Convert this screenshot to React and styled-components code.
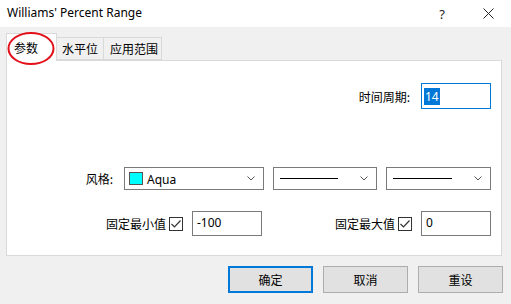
import React from 'react';
import styled, { createGlobalStyle } from 'styled-components';

const GlobalStyle = createGlobalStyle`
  html, body {
    margin: 0;
    padding: 0;
    background: #f0f0f0;
  }
  body {
    font-family: "Noto Sans", "Noto Sans CJK SC", sans-serif;
    font-size: 12px;
    color: #000;
  }
`;

const Window = styled.div`
  width: 511px;
  height: 304px;
  display: flex;
  flex-direction: column;
  background: #f0f0f0;
  overflow: hidden;
`;

const TitleBar = styled.div`
  height: 27px;
  flex: none;
  background: #fff;
  display: flex;
  align-items: center;
  padding-left: 7px;
`;

const Title = styled.div`
  flex: 1;
  font-size: 12px;
  margin-top: -2px;
`;

const TitleButton = styled.div`
  width: 46px;
  height: 27px;
  display: flex;
  align-items: center;
  justify-content: center;
  font-size: 13px;
  color: #222;
`;

const Body = styled.div`
  flex: 1;
  display: flex;
  flex-direction: column;
  padding: 6px 9px 0 6px;
`;

const TabStrip = styled.div`
  display: flex;
  align-items: flex-end;
  height: 27px;
  position: relative;
  z-index: 1;
`;

const Tab = styled.div`
  position: relative;
  width: ${(p) => p.$w}px;
  height: ${(p) => (p.$active ? '28px' : '23px')};
  margin-bottom: ${(p) => (p.$active ? '-1px' : '0')};
  padding-left: ${(p) => p.$pad}px;
  box-sizing: border-box;
  display: flex;
  align-items: center;
  background: ${(p) => (p.$active ? '#fff' : '#f0f0f0')};
  border: 1px solid #d9d9d9;
  border-bottom: ${(p) => (p.$active ? 'none' : '1px solid #d9d9d9')};
  border-left: ${(p) => (p.$first || p.$active ? '1px solid #d9d9d9' : 'none')};
  font-family: "Noto Sans CJK SC", sans-serif;
  font-size: 12px;
  line-height: 1;
`;

const Ring = styled.svg`
  position: absolute;
  left: 0;
  top: -2px;
  pointer-events: none;
`;

const Panel = styled.div`
  height: 196px;
  box-sizing: border-box;
  background: #fff;
  border: 1px solid #d9d9d9;
  display: flex;
  flex-direction: column;
  padding: 22px 10px 0 0;
`;

const Row = styled.div`
  display: flex;
  align-items: center;
  justify-content: flex-end;
  gap: ${(p) => p.$gap || 0}px;
  margin-top: ${(p) => p.$top || 0}px;
`;

const Group = styled.div`
  display: flex;
  align-items: center;
`;

const Label = styled.span`
  font-family: "Noto Sans CJK SC", sans-serif;
  font-size: 12px;
  margin-right: ${(p) => p.$gap || 0}px;
  white-space: nowrap;
`;

const TextBox = styled.div`
  width: ${(p) => p.$w}px;
  height: ${(p) => p.$h}px;
  box-sizing: border-box;
  border: 1px solid ${(p) => (p.$focus ? '#0078d7' : '#7a7a7a')};
  background: #fff;
  display: flex;
  align-items: ${(p) => (p.$focus ? 'center' : 'flex-start')};
  padding: ${(p) => (p.$focus ? '0 2px' : '2px 4px')};
  font-family: "Noto Sans", sans-serif;
  font-size: 12px;
`;

const Selected = styled.span`
  background: #0078d7;
  color: #fff;
  padding: 0 1px;
  line-height: 17px;
`;

const Select = styled.div`
  width: ${(p) => p.$w}px;
  height: 23px;
  box-sizing: border-box;
  border: 1px solid #7a7a7a;
  background: #fff;
  display: flex;
  align-items: center;
  padding: 0 8px 0 ${(p) => p.$padLeft || 6}px;
  gap: 4px;
`;

const Swatch = styled.div`
  width: 14px;
  height: 13px;
  background: #00ffff;
  border: 1px solid #555;
  box-sizing: border-box;
`;

const SelectText = styled.span`
  flex: 1;
  font-family: "Noto Sans", sans-serif;
  font-size: 12px;
  margin-top: 2px;
`;

const Line = styled.div`
  flex: 1;
  height: 1px;
  background: #000;
  margin-right: 18px;
`;

const Chevron = () => (
  <svg width="8" height="5" viewBox="0 0 8 5">
    <path d="M0.5 0.5 L4 4 L7.5 0.5" fill="none" stroke="#555" strokeWidth="1" />
  </svg>
);

const Check = styled.div`
  width: 14px;
  height: 14px;
  box-sizing: border-box;
  border: 1px solid #333;
  background: #fff;
  margin: 0 9px 0 3px;
  display: flex;
  align-items: center;
  justify-content: center;
`;

const Footer = styled.div`
  display: flex;
  justify-content: flex-end;
  gap: 10px;
  padding-top: 10px;
  margin-right: -1px;
`;

const Button = styled.div`
  width: 85px;
  height: 27px;
  box-sizing: border-box;
  background: #e1e1e1;
  border: ${(p) => (p.$default ? '2px solid #0078d7' : '1px solid #adadad')};
  display: flex;
  align-items: center;
  justify-content: center;
  font-family: "Noto Sans CJK SC", sans-serif;
  font-size: 12px;
`;

function CheckBox() {
  return (
    <Check>
      <svg width="12" height="12" viewBox="0 0 12 12">
        <path d="M1.5 6 L4.5 9 L10.5 2.5" fill="none" stroke="#333" strokeWidth="1.2" />
      </svg>
    </Check>
  );
}

export default function App() {
  return (
    <Window>
      <GlobalStyle />
      <TitleBar>
        <Title>Williams' Percent Range</Title>
        <TitleButton>?</TitleButton>
        <TitleButton>
          <svg width="11" height="11" viewBox="0 0 11 11">
            <path d="M0.5 0.5 L10.5 10.5 M10.5 0.5 L0.5 10.5" stroke="#222" strokeWidth="1" />
          </svg>
        </TitleButton>
      </TitleBar>
      <Body>
        <TabStrip>
          <Tab $active $first $w={51} $pad={7}>
            参数
            <Ring width="50" height="34" viewBox="0 0 50 34">
              <ellipse cx="24" cy="16.5" rx="22.5" ry="15.5" fill="none" stroke="#e3101a" strokeWidth="2" />
            </Ring>
          </Tab>
          <Tab $w={47} $pad={5}>水平位</Tab>
          <Tab $w={58} $pad={6}>应用范围</Tab>
        </TabStrip>
        <Panel>
          <Row>
            <Label $gap={11}>时间周期:</Label>
            <TextBox $w={70} $h={26} $focus>
              <Selected>14</Selected>
            </TextBox>
          </Row>
          <Row $top={58} $gap={9}>
            <Group>
              <Label $gap={11}>风格:</Label>
              <Select $w={140} $padLeft={4}>
                <Swatch />
                <SelectText>Aqua</SelectText>
                <Chevron />
              </Select>
            </Group>
            <Select $w={104}>
              <Line />
              <Chevron />
            </Select>
            <Select $w={105}>
              <Line />
              <Chevron />
            </Select>
          </Row>
          <Row $top={21} $gap={73}>
            <Group>
              <Label>固定最小值</Label>
              <CheckBox />
              <TextBox $w={70} $h={25}>-100</TextBox>
            </Group>
            <Group>
              <Label>固定最大值</Label>
              <CheckBox />
              <TextBox $w={70} $h={25}>0</TextBox>
            </Group>
          </Row>
        </Panel>
        <Footer>
          <Button $default>确定</Button>
          <Button>取消</Button>
          <Button>重设</Button>
        </Footer>
      </Body>
    </Window>
  );
}
